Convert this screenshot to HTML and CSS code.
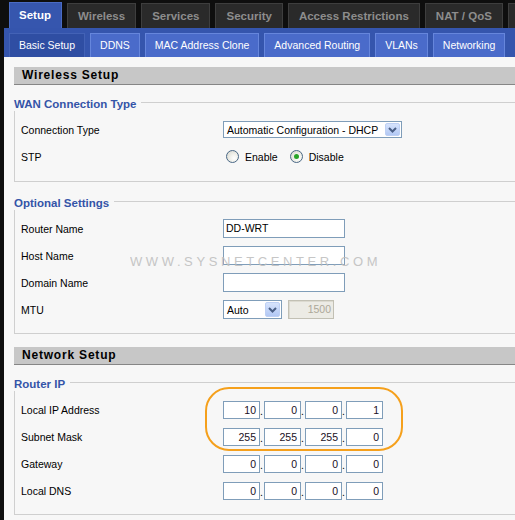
FILE: index.html
```html
<!DOCTYPE html>
<html>
<head>
<meta charset="utf-8">
<title>Setup - Basic Setup</title>
<link rel="stylesheet" href="styles.css">
</head>
<body>
<div class="page">
  <ul class="tabs">
    <li class="tab active">Setup</li>
    <li class="tab">Wireless</li>
    <li class="tab">Services</li>
    <li class="tab">Security</li>
    <li class="tab">Access Restrictions</li>
    <li class="tab">NAT / QoS</li>
    <li class="tab stub"></li>
  </ul>
  <ul class="subtabs">
    <li class="subtab active">Basic Setup</li>
    <li class="subtab">DDNS</li>
    <li class="subtab">MAC Address Clone</li>
    <li class="subtab">Advanced Routing</li>
    <li class="subtab">VLANs</li>
    <li class="subtab">Networking</li>
  </ul>
  <div class="content">
    <h2 class="section">Wireless Setup</h2>
    <fieldset class="first">
      <legend>WAN Connection Type</legend>
      <div class="row">
        <span class="lbl">Connection Type</span>
        <div class="select wide"><span class="txt">Automatic Configuration - DHCP</span><span class="btn"><svg width="9" height="6" viewBox="0 0 9 6"><polyline points="1,1 4.5,4.5 8,1" fill="none" stroke="#4a5f86" stroke-width="2"/></svg></span></div>
      </div>
      <div class="row">
        <span class="lbl">STP</span>
        <span class="radio"></span><span class="rtxt">Enable</span>
        <span class="radio on"></span><span class="rtxt">Disable</span>
      </div>
    </fieldset>
    <fieldset>
      <legend>Optional Settings</legend>
      <div class="row"><span class="lbl">Router Name</span><span class="input">DD-WRT</span></div>
      <div class="row"><span class="lbl">Host Name</span><span class="input"></span></div>
      <div class="row"><span class="lbl">Domain Name</span><span class="input"></span></div>
      <div class="row">
        <span class="lbl">MTU</span>
        <div class="select small"><span class="txt">Auto</span><span class="btn"><svg width="9" height="6" viewBox="0 0 9 6"><polyline points="1,1 4.5,4.5 8,1" fill="none" stroke="#4a5f86" stroke-width="2"/></svg></span></div>
        <span class="input disabled">1500</span>
      </div>
    </fieldset>
    <h2 class="section">Network Setup</h2>
    <fieldset>
      <legend>Router IP</legend>
      <div class="rows">
        <div class="row"><span class="lbl">Local IP Address</span>
          <span class="ip">10</span><span class="dot">.</span><span class="ip">0</span><span class="dot">.</span><span class="ip">0</span><span class="dot">.</span><span class="ip">1</span></div>
        <div class="row"><span class="lbl">Subnet Mask</span>
          <span class="ip">255</span><span class="dot">.</span><span class="ip">255</span><span class="dot">.</span><span class="ip">255</span><span class="dot">.</span><span class="ip">0</span></div>
        <div class="row"><span class="lbl">Gateway</span>
          <span class="ip">0</span><span class="dot">.</span><span class="ip">0</span><span class="dot">.</span><span class="ip">0</span><span class="dot">.</span><span class="ip">0</span></div>
        <div class="row"><span class="lbl">Local DNS</span>
          <span class="ip">0</span><span class="dot">.</span><span class="ip">0</span><span class="dot">.</span><span class="ip">0</span><span class="dot">.</span><span class="ip">0</span></div>
        <div class="highlight"></div>
      </div>
    </fieldset>
    <div class="watermark">WWW.SYSNETCENTER.COM</div>
  </div>
</div>
</body>
</html>
```

FILE: styles.css
```css
* { box-sizing: border-box; }
html, body {
  margin: 0;
  padding: 0;
  background: #0e0e0e;
  overflow: hidden;
}
body {
  font-family: "Liberation Sans", Arial, sans-serif;
  font-size: 10.5px;
  color: #000;
}
.page {
  width: 620px;
  padding-left: 4px;
}

/* main tabs */
.tabs {
  list-style: none;
  margin: 0;
  padding: 3px 0 0 5px;
  display: flex;
  gap: 5px;
  height: 28px;
}
.tab {
  height: 25px;
  padding: 0 10px;
  background: #2a2a2a;
  border: 1px solid #3e3e3e;
  border-bottom: none;
  color: #8d8d8d;
  font-weight: bold;
  font-size: 11.5px;
  line-height: 24px;
  white-space: nowrap;
}
.tab.stub {
  width: 40px;
}
.tab.active {
  height: 26px;
  margin-top: -1px;
  padding: 0 10px 0 9px;
  background: #3656ae;
  border-color: #4a6bc4;
  color: #fff;
}

/* sub tabs */
.subtabs {
  list-style: none;
  margin: 0;
  padding: 5px 0 0 5px;
  display: flex;
  gap: 5px;
  height: 29px;
  background: #3555ad;
}
.subtab {
  height: 24px;
  padding: 0 9px;
  background: #4a6bca;
  border: 1px solid #6686dc;
  border-bottom: none;
  color: #fff;
  font-size: 10.5px;
  line-height: 23px;
  white-space: nowrap;
}
.subtab.active {
  background: #2f4ea3;
  border-color: #4362b6;
}

/* content */
.content {
  position: relative;
  background: #f7f7f7;
  padding: 10px 0 30px 10px;
}
.section {
  margin: 0;
  height: 18px;
  padding-left: 8px;
  background: #c7c7c7;
  border-bottom: 1px solid #868686;
  font-size: 12px;
  font-weight: bold;
  letter-spacing: 0.8px;
  line-height: 17px;
  color: #000;
}
fieldset {
  margin: 9px 0 0 0;
  padding: 5px 0 10px 0;
  border: 1px solid #cfcfcf;
  min-width: 0;
}
fieldset.first {
  padding-bottom: 11px;
}
fieldset + fieldset {
  margin-top: 11px;
}
fieldset + .section {
  margin-top: 13px;
}
legend {
  margin-left: -1px;
  padding: 3px 5px 0 0;
  font-size: 11.5px;
  font-weight: bold;
  line-height: 14px;
  color: #3454a8;
}
.rows {
  position: relative;
}
.row {
  display: flex;
  align-items: center;
  height: 27px;
  padding-left: 6px;
}
.lbl {
  flex: none;
  width: 202px;
}

/* controls */
.select {
  display: flex;
  align-items: center;
  height: 17px;
  padding-left: 3px;
  background: #fff;
  border: 1px solid #7f9db9;
}
.select.wide { width: 179px; }
.select.small { width: 59px; height: 19px; }
.select .txt {
  flex: 1;
  white-space: nowrap;
}
.select .btn {
  display: flex;
  align-items: center;
  justify-content: center;
  width: 15px;
  height: 13px;
  margin-right: 1px;
  background: linear-gradient(#d6e3fc, #b2c8f4);
  border: 1px solid #bed0f4;
  border-radius: 2px;
}
.select.small .btn { height: 15px; }

.radio {
  display: flex;
  align-items: center;
  justify-content: center;
  width: 13px;
  height: 13px;
  margin-left: 3px;
  border: 1px solid #4a6886;
  border-radius: 50%;
  background: radial-gradient(circle at 65% 65%, #ffffff 0%, #f0f0ea 40%, #d4d4cc 100%);
}
.radio.on::after {
  content: "";
  width: 5px;
  height: 5px;
  border-radius: 50%;
  background: #28a428;
}
.rtxt {
  margin-left: 6px;
  margin-right: 9px;
}

.input {
  width: 122px;
  height: 19px;
  padding-left: 2px;
  background: #fff;
  border: 1px solid #7f9db9;
  line-height: 17px;
}
.input.disabled {
  width: 46px;
  margin-left: 6px;
  padding-right: 2px;
  background: #ecebe5;
  border: 1px solid #c2c0b4;
  box-shadow: inset 1px 1px 0 #dcdad0;
  color: #aca899;
  text-align: right;
}
.ip {
  width: 37px;
  height: 18px;
  padding-right: 3px;
  background: #fff;
  border: 1px solid #7f9db9;
  color: #1a1024;
  line-height: 16px;
  text-align: right;
}
.dot {
  width: 4px;
  text-align: left;
  line-height: 18px;
  padding-top: 3px;
}

/* overlays */
.highlight {
  position: absolute;
  left: 190px;
  top: -9px;
  width: 198px;
  height: 64px;
  border: 2px solid #f5a01c;
  border-radius: 24px;
}
.watermark {
  position: absolute;
  left: 126px;
  top: 199px;
  font-family: "Liberation Sans", Arial, sans-serif;
  font-size: 13px;
  line-height: 12px;
  letter-spacing: 3.6px;
  color: #bdbdbd;
  opacity: 0.85;
  white-space: nowrap;
}
```
